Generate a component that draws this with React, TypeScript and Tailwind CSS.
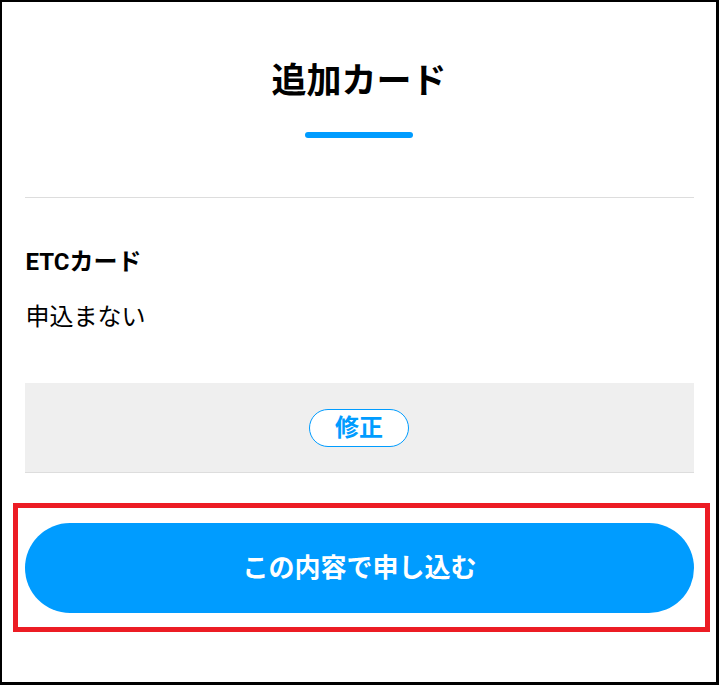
import React from 'react';

const AdditionalCardConfirm = () => {
  return (
    <div className="min-h-[685px] w-[719px] bg-white border-l-2 border-t-2 border-r-[3px] border-b-[3px] border-black font-['Roboto','Noto_Sans_CJK_JP',sans-serif] text-black">
      {/* header */}
      <div className="w-[669px] mx-auto flex flex-col items-center pt-[60px] pb-[59px] border-b border-[#dddddd]">
        <h1 className="h-[40px] leading-[40px] text-[35px] font-bold">追加カード</h1>
        <div className="mt-[30px] h-[6px] w-[108px] rounded-full bg-[#009cff]" />
      </div>

      {/* selected option */}
      <div className="w-[669px] mx-auto">
        <div className="mt-[48px] pl-[1px] leading-[32px] text-[24px] font-bold">ETCカード</div>
        <div className="mt-[23px] pl-[1px] leading-[32px] text-[24px]">申込まない</div>

        <div className="mt-[50px] h-[90px] bg-[#efefef] border-b border-[#dddddd] flex items-center justify-center">
          <button
            type="button"
            className="w-[100px] h-[38px] rounded-full bg-white border border-[#009cff] text-[#009cff] text-[24px] font-bold leading-none"
          >
            修正
          </button>
        </div>
      </div>

      {/* submit */}
      <div className="mt-[30px] ml-[11px] w-[697px] border-[5px] border-[#ec1c24] pt-[15px] pb-[14px] pl-[7px]">
        <button
          type="button"
          className="w-[669px] h-[90px] rounded-full bg-[#009cff] text-white text-[26px] font-bold"
        >
          この内容で申し込む
        </button>
      </div>
    </div>
  );
};

export default function App() {
  return <AdditionalCardConfirm />;
}
